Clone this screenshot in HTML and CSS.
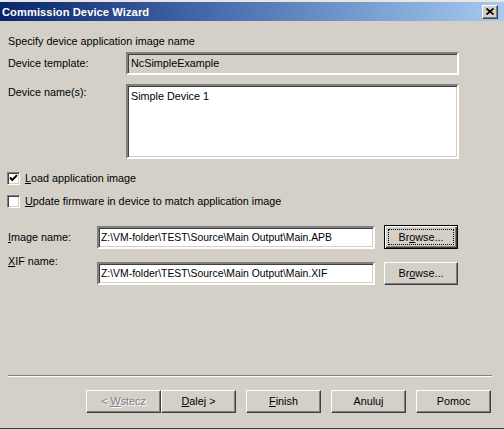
FILE: index.html
```html
<!DOCTYPE html>
<html>
<head>
<meta charset="utf-8">
<link rel="stylesheet" href="styles.css">
</head>
<body>
<div class="window">
  <div class="titlebar">
    <span class="title">Commission Device Wizard</span>
    <span class="close"><svg width="8" height="7" viewBox="0 0 8 7"><path d="M0.5 0.5 L7.5 6.5 M7.5 0.5 L0.5 6.5" stroke="#000" stroke-width="1.7" fill="none"/></svg></span>
  </div>
  <div class="content">
    <p class="heading">Specify device application image name</p>
    <div class="row row-template">
      <span class="label wide">Device template:</span>
      <div class="field readonly">NcSimpleExample</div>
    </div>
    <div class="row row-names">
      <span class="label wide">Device name(s):</span>
      <div class="field area">Simple Device 1</div>
    </div>
    <div class="check check-first">
      <span class="box"><svg width="9" height="9" viewBox="0 0 9 9"><polyline points="1,3.5 3.3,6 8,1.2" stroke="#000" stroke-width="1.9" fill="none"/></svg></span>
      <span class="check-label"><u>L</u>oad application image</span>
    </div>
    <div class="check check-second">
      <span class="box"></span>
      <span class="check-label"><u>U</u>pdate firmware in device to match application image</span>
    </div>
    <div class="row row-image">
      <span class="label narrow"><u>I</u>mage name:</span>
      <div class="field path">Z:\VM-folder\TEST\Source\Main Output\Main.APB</div>
      <span class="btn browse default"><span class="focus">Br<u>o</u>wse...</span></span>
    </div>
    <div class="row row-xif">
      <span class="label narrow"><u>X</u>IF name:</span>
      <div class="field path">Z:\VM-folder\TEST\Source\Main Output\Main.XIF</div>
      <span class="btn browse">Br<u>o</u>wse...</span>
    </div>
  </div>
  <div class="separator"></div>
  <div class="buttons">
    <span class="btn nav disabled">&lt;&nbsp;<u>W</u>stecz</span>
    <span class="btn nav"><u>D</u>alej &gt;</span>
    <span class="btn nav spaced"><u>F</u>inish</span>
    <span class="btn nav spaced">Anuluj</span>
    <span class="btn nav spaced">Pomoc</span>
  </div>
</div>
</body>
</html>
```

FILE: styles.css
```css
html, body {
  margin: 0;
  padding: 0;
}
body {
  width: 504px;
  height: 430px;
  overflow: hidden;
  background: #d4d0c8;
  font-family: "Liberation Sans", Arial, sans-serif;
  font-size: 10.8px;
  color: #000;
}
.window {
  height: 426px;
  border-bottom: 1px solid #404040;
  background: #d4d0c8;
  border-top: 2px solid #e8e6e1;
}
.titlebar {
  height: 19px;
  background: linear-gradient(to right, #0a246a 0%, #4a70b0 45%, #a6caf0 100%);
  display: flex;
  align-items: center;
  justify-content: space-between;
  padding: 0 6px 0 2px;
}
.title {
  color: #fff;
  font-weight: bold;
  font-size: 11.1px;
  letter-spacing: 0.1px;
}
.close {
  width: 14px;
  height: 12px;
  background: #d4d0c8;
  border: 1px solid;
  border-color: #fff #404040 #404040 #fff;
  box-shadow: inset -1px -1px #808080;
  display: flex;
  align-items: center;
  justify-content: center;
}
.content {
  padding-left: 8px;
}
.heading {
  margin: 0;
  padding-top: 14px;
  line-height: 13px;
}
.row {
  display: flex;
  align-items: center;
}
.label {
  line-height: 13px;
  flex: none;
}
.label.wide { width: 118px; }
.label.narrow { width: 89px; }
.field {
  box-sizing: border-box;
  border: 2px solid;
  border-color: #808080 #fff #fff #808080;
  box-shadow: inset 1px 1px #404040, inset -1px -1px #d4d0c8;
  background: #fff;
  white-space: nowrap;
  overflow: hidden;
}
.row-template { margin-top: 4px; }
.readonly {
  width: 333px;
  height: 23px;
  line-height: 19px;
  padding-left: 3px;
  background: #d4d0c8;
}
.row-names {
  margin-top: 9px;
  align-items: flex-start;
}
.row-names .label { margin-top: 2px; }
.area {
  width: 333px;
  height: 75px;
  padding: 4px 3px;
  line-height: 13px;
}
.check {
  display: flex;
  align-items: center;
  height: 14px;
  margin-left: -1px;
}
.check-first { margin-top: 12px; }
.check-second { margin-top: 9px; }
.box {
  box-sizing: border-box;
  width: 13px;
  height: 13px;
  border: 1px solid;
  border-color: #808080 #fff #fff #808080;
  box-shadow: inset 1px 1px #404040, inset -1px -1px #d4d0c8;
  background: #fff;
  display: flex;
  align-items: center;
  justify-content: center;
  flex: none;
}
.check-label {
  margin-left: 5px;
  line-height: 13px;
}
.row-image { margin-top: 17px; }
.path {
  width: 278px;
  height: 23px;
  line-height: 19px;
  padding-left: 2px;
  font-size: 10.4px;
}
.btn {
  box-sizing: border-box;
  display: flex;
  align-items: center;
  justify-content: center;
  background: #d4d0c8;
  border: 1px solid;
  border-color: #fff #404040 #404040 #fff;
  box-shadow: inset -1px -1px #808080;
  line-height: 13px;
  flex: none;
}
.browse {
  width: 74px;
  height: 24px;
  margin-left: 9px;
}
.browse.default {
  border: 1px solid #000;
  box-shadow: inset 1px 1px #fff, inset -1px -1px #404040, inset -2px -2px #808080;
}
.focus {
  box-sizing: border-box;
  width: 66px;
  height: 16px;
  border: 1px dotted #000;
  display: flex;
  align-items: center;
  justify-content: center;
}
.row-xif {
  margin-top: 6px;
  align-items: flex-start;
}
.row-xif .field,
.row-xif .btn { margin-top: 7px; }
.row-xif .btn { height: 23px; }
.separator {
  margin: 90px 12px 0 8px;
  height: 1px;
  background: #808080;
  border-bottom: 1px solid #fff;
}
.buttons {
  display: flex;
  justify-content: flex-end;
  padding-right: 13px;
  margin-top: 13px;
}
.nav {
  width: 75px;
  height: 23px;
}
.nav.spaced { margin-left: 10px; }
.disabled {
  color: #808080;
  text-shadow: 1px 1px #fff;
}
```
